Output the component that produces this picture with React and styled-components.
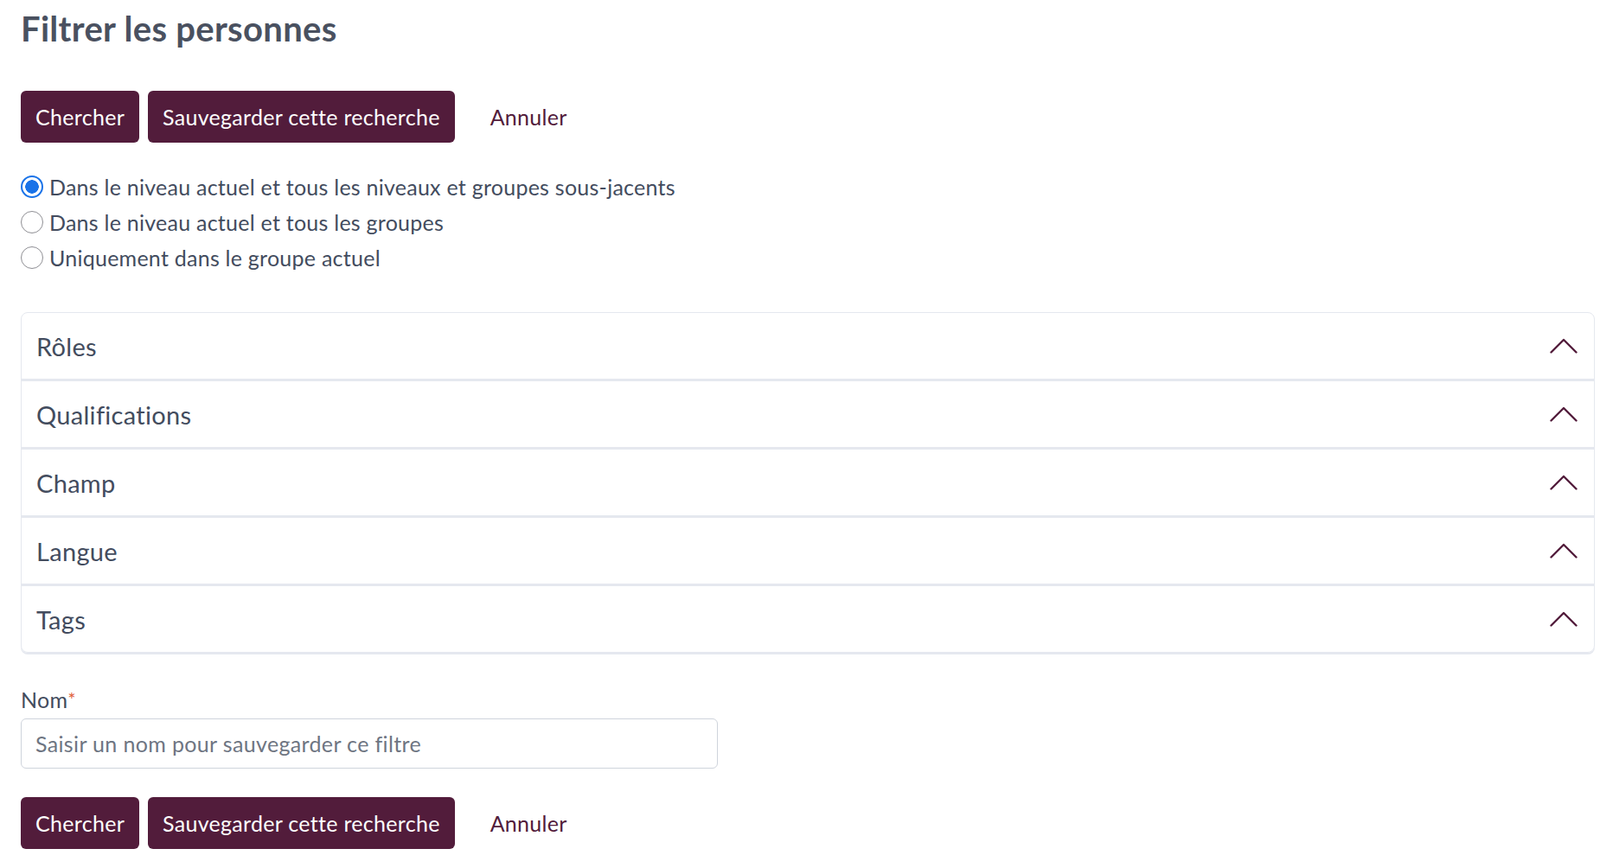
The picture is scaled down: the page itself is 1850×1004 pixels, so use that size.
import React from 'react'
import styled, { createGlobalStyle } from 'styled-components'

const GlobalStyle = createGlobalStyle`
  body {
    margin: 0;
    background: #fff;
    font-family: Lato, "Liberation Sans", sans-serif;
    color: #434c5e;
  }
  * { box-sizing: border-box; }
`

const maroon = '#521c3b'

const Page = styled.div`
  padding: 0 6px 20px 24px;
`

const Title = styled.h1`
  margin: 0;
  padding-top: 11px;
  font-size: 40px;
  line-height: 44px;
  font-weight: 700;
  color: #4a5160;
  letter-spacing: 0.3px;
`

const ButtonRow = styled.div`
  display: flex;
  align-items: center;
  gap: 10px;
  margin-top: ${p => p.$top}px;
`

const Button = styled.button`
  height: 60px;
  padding: 0 17px;
  border: none;
  border-radius: 6px;
  background: ${maroon};
  color: #fff;
  font-family: inherit;
  font-size: 25px;
  letter-spacing: 0.3px;
  cursor: pointer;
`

const LinkButton = styled.button`
  margin-left: 31px;
  border: none;
  background: none;
  color: ${maroon};
  font-family: inherit;
  font-size: 25px;
  letter-spacing: 0.3px;
  padding: 0;
  cursor: pointer;
`

const RadioGroup = styled.div`
  display: flex;
  flex-direction: column;
  margin-top: 30px;
`

const RadioLabel = styled.label`
  display: flex;
  align-items: center;
  gap: 7px;
  height: 41px;
  font-size: 25px;
  letter-spacing: 0.25px;
  color: #434c5e;
`

const Radio = styled.input`
  appearance: none;
  margin: 0;
  width: 26px;
  height: 26px;
  border-radius: 50%;
  border: 1.5px solid #8e8e93;
  background: #fff;
  flex: none;

  &:checked {
    border: 2px solid #1a73e8;
    background: radial-gradient(circle, #1a73e8 0 7.5px, #fff 8px);
  }
`

const Accordion = styled.div`
  margin-top: 43px;
  border: 1px solid #e5e8ef;
  border-radius: 8px;
  box-shadow: 0 2px 0 #e5e8ef;
  overflow: hidden;
`

const Item = styled.div`
  display: flex;
  align-items: center;
  justify-content: space-between;
  height: ${p => (p.$last ? 76 : 79)}px;
  padding: 0 19px 0 17px;
  font-size: 29px;
  letter-spacing: 0.3px;
  color: #434c5e;
  border-bottom: ${p => (p.$last ? 'none' : '3px solid #e5e8ef')};
`

const Label = styled.div`
  margin-top: 38px;
  font-size: 25px;
  line-height: 32px;
  letter-spacing: 0.25px;
  color: #434c5e;
`

const Star = styled.span`
  color: #e0603a;
  vertical-align: top;
  font-size: 22px;
`

const TextInput = styled.input`
  display: block;
  margin-top: 6px;
  width: 806px;
  height: 58px;
  padding: 0 16px;
  border: 1.5px solid #cfd4dc;
  border-radius: 6px;
  font-family: inherit;
  font-size: 25px;
  letter-spacing: 0.35px;
  color: #434c5e;

  &::placeholder {
    color: #6e7582;
  }
`

const Chevron = () => (
  <svg width="32" height="18" viewBox="0 0 32 18" fill="none">
    <polyline points="1.5,16.5 16,2 30.5,16.5" stroke={maroon} strokeWidth="2.4" strokeLinecap="round" strokeLinejoin="round" />
  </svg>
)

const Actions = ({ top }) => (
  <ButtonRow $top={top}>
    <Button>Chercher</Button>
    <Button>Sauvegarder cette recherche</Button>
    <LinkButton>Annuler</LinkButton>
  </ButtonRow>
)

const sections = ['Rôles', 'Qualifications', 'Champ', 'Langue', 'Tags']

const scopes = [
  'Dans le niveau actuel et tous les niveaux et groupes sous-jacents',
  'Dans le niveau actuel et tous les groupes',
  'Uniquement dans le groupe actuel',
]

export default function App() {
  return (
    <Page>
      <GlobalStyle />
      <Title>Filtrer les personnes</Title>
      <Actions top={50} />
      <RadioGroup>
        {scopes.map((s, i) => (
          <RadioLabel key={s}>
            <Radio type="radio" name="scope" defaultChecked={i === 0} />
            {s}
          </RadioLabel>
        ))}
      </RadioGroup>
      <Accordion>
        {sections.map((s, i) => (
          <Item key={s} $last={i === sections.length - 1}>
            <span>{s}</span>
            <Chevron />
          </Item>
        ))}
      </Accordion>
      <Label>Nom<Star>*</Star></Label>
      <TextInput placeholder="Saisir un nom pour sauvegarder ce filtre" />
      <Actions top={33} />
    </Page>
  )
}
